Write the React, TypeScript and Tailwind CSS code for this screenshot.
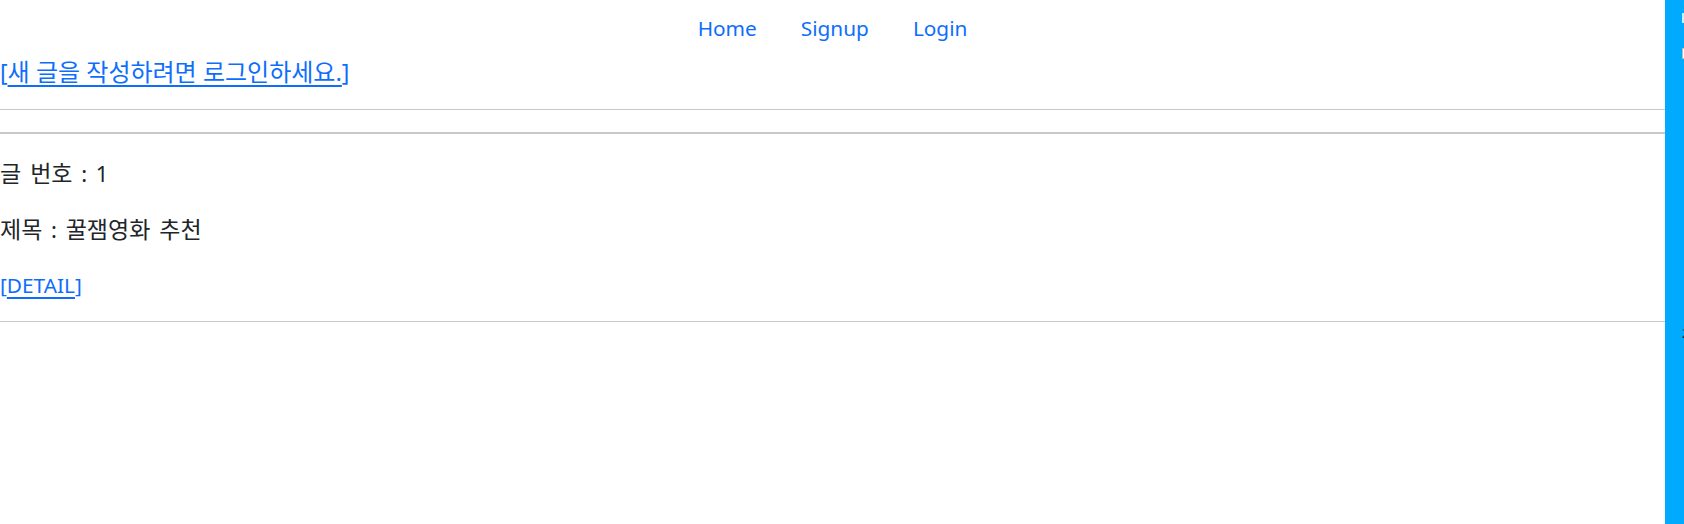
export default function App() {
  const font = { fontFamily: '"Noto Sans", "Noto Sans CJK KR", sans-serif' };
  const ko = "text-[24px] leading-[28px]";
  const ko2 = "text-[23px] leading-[28px]";
  return (
    <div className="flex w-[1684px] h-[524px] bg-white overflow-hidden" style={font}>
      <main className="w-[1665px] shrink-0 text-[20.8px] text-[#212529]">
        <nav className="flex justify-center gap-[44px] pt-[14px] leading-[28px]">
          <a className="text-[#0d6efd]">Home</a>
          <a className="text-[#0d6efd]">Signup</a>
          <a className="text-[#0d6efd]">Login</a>
        </nav>
        <div className="mt-[16px] h-[28px] leading-[28px] text-[#0d6efd] text-[23px]">
          <span className="leading-[28px]">[</span>
          <a className={`underline underline-offset-[4px] ${ko}`}>새 글을 작성하려면 로그인하세요.</a>
          <span className="leading-[28px]">]</span>
        </div>
        <div className="mt-[23px] h-px bg-[#c8c8c8]" />
        <div className="mt-[22px] h-[2px] bg-[#c8c8c8]" />
        <div className="mt-[25px] h-[28px] leading-[28px] text-[22px] [word-spacing:3px]">
          <span className={ko2}>글 번호</span> : 1
        </div>
        <div className="mt-[28px] h-[28px] leading-[28px] text-[22px] [word-spacing:3px]">
          <span className={ko2}>제목</span> : <span className={ko2}>꿀잼영화 추천</span>
        </div>
        <div className="mt-[28px] h-[28px] leading-[28px] text-[#0d6efd]">
          <span>[</span>
          <a className="underline underline-offset-[4px]">DETAIL</a>
          <span>]</span>
        </div>
        <div className="mt-[22px] h-px bg-[#c8c8c8]" />
      </main>
      <aside className="w-[19px] shrink-0 h-full bg-[#00aaff] overflow-hidden">
        <div className="w-[200px] pl-[17px] pt-[13px] flex flex-col">
          <div className="h-[10px] w-[40px] bg-white/80" />
          <div className="mt-[25px] h-[11px] w-[120px] bg-white border border-[#bbbbbb]" />
          <div className="mt-[270px] text-[12px] leading-[10px] text-[#1a1a4a]">2</div>
        </div>
      </aside>
    </div>
  );
}
